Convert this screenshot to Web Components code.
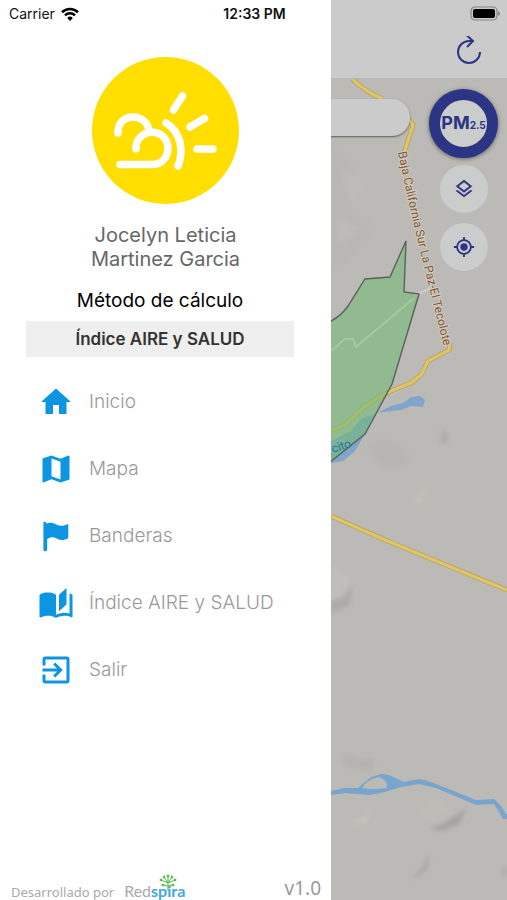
<!DOCTYPE html>
<html lang="es">
<head>
<meta charset="utf-8">
<meta name="viewport" content="width=device-width, initial-scale=1">
<title>Menú</title>
<style>
  body {
    margin: 0;
    font-family: Inter, "Liberation Sans", sans-serif;
    background: #fff;
  }
</style>
</head>
<body>
<app-screen>
  <side-menu slot="menu">
    <user-card slot="header" name="Jocelyn Leticia Martinez Garcia"></user-card>
    <calc-method slot="header" label="Método de cálculo" value="Índice AIRE y SALUD"></calc-method>
    <menu-item icon="home">Inicio</menu-item>
    <menu-item icon="map">Mapa</menu-item>
    <menu-item icon="flag">Banderas</menu-item>
    <menu-item icon="book">Índice AIRE y SALUD</menu-item>
    <menu-item icon="exit">Salir</menu-item>
    <menu-footer slot="footer" version="v1.0"></menu-footer>
  </side-menu>
  <map-page></map-page>
</app-screen>

<script>
const ICONS = {
  home: '<path d="M10 20v-6h4v6h5v-8h3L12 3 2 12h3v8z"/>',
  map: '<path d="M20.5 3l-.16.03L15 5.1 9 3 3.36 4.9c-.21.07-.36.25-.36.48V20.5c0 .28.22.5.5.5l.16-.03L9 18.9l6 2.1 5.64-1.9c.21-.07.36-.25.36-.48V3.5c0-.28-.22-.5-.5-.5zM15 19l-6-2.11V5l6 2.11z"/>',
  flag: '<path d="M4.1 2.5C4.8 2.5 5.5 2.8 5.6 3.6C8 2.9 9.800 3 12.2 4.3C14.5 5.5 17.2 5.5 20.2 3.8V13.3C17.5 15 15 15.200 12.4 13.700C10.5 12.6 8.5 12.600 6.1 14V21C6.100 21.8 5.7 22.200 4.900 22.2C4 22.2 3.600 21.800 3.600 21V3.200C3.600 2.800 3.800 2.500 4.100 2.500Z"/>',
  book: '<path d="M19 2L14 6.5V17.5L19 13V2M6.5 5C4.55 5 2.45 5.4 1 6.5V21.16C1 21.41 1.25 21.66 1.5 21.66C1.6 21.66 1.65 21.59 1.75 21.59C3.1 20.94 5.05 20.5 6.5 20.5C8.45 20.5 10.55 20.9 12 22C13.35 21.15 15.8 20.5 17.5 20.5C19.15 20.5 20.85 20.81 22.25 21.56C22.35 21.61 22.4 21.59 22.5 21.59C22.75 21.59 23 21.34 23 21.09V6.5C22.4 6.05 21.75 5.75 21 5.5V19C19.9 18.65 18.7 18.5 17.5 18.5C15.8 18.5 13.35 19.15 12 20V6.5C10.55 5.4 8.45 5 6.5 5Z"/>',
  exit: '<path d="M10.09 15.59L11.5 17l5-5-5-5-1.41 1.41L12.67 11H3v2h9.67l-2.58 2.59zM19 3H5a2 2 0 0 0-2 2v4h2V5h14v14H5v-4H3v4a2 2 0 0 0 2 2h14a2 2 0 0 0 2-2V5a2 2 0 0 0-2-2z"/>',
};

class AppScreen extends HTMLElement {
  constructor() {
    super();
    this.attachShadow({ mode: 'open' });
  }

  connectedCallback() {
    this.shadowRoot.innerHTML = `
      <style>
        :host {
          position: relative;
          display: grid;
          grid-template-columns: minmax(0, 331px) minmax(0, 1fr);
          min-height: 100vh;
        }
        status-bar {
          position: absolute;
          inset: 0 0 auto 0;
        }
      </style>
      <slot name="menu"></slot>
      <slot></slot>
      <status-bar></status-bar>
    `;
  }
}

class StatusBar extends HTMLElement {
  constructor() {
    super();
    this.attachShadow({ mode: 'open' });
  }

  connectedCallback() {
    this.shadowRoot.innerHTML = `
      <style>
        :host {
          display: grid;
          grid-template-columns: 1fr auto 1fr;
          align-items: center;
          height: 27px;
          padding: 0 7px 0 9px;
          font-size: 14px;
          color: #111;
        }
        .carrier {
          display: flex;
          align-items: center;
          gap: 6px;
        }
        .time { font-weight: 600; }
        .battery { justify-self: end; }
        svg { display: block; }
      </style>
      <div class="carrier">
        <span>Carrier</span>
        <svg width="18" height="14" viewBox="0 0 18 14" fill="none" stroke="#000" stroke-width="2.6">
          <path d="M1 5.2A11.5 11.5 0 0 1 17 5.2"/>
          <path d="M4 8.3A7 7 0 0 1 14 8.3"/>
          <path d="M9 14L6.2 10.9A4 4 0 0 1 11.8 10.9Z" fill="#000" stroke="none"/>
        </svg>
      </div>
      <span class="time">12:33 PM</span>
      <svg class="battery" width="30" height="15" viewBox="0 0 30 15">
        <rect x="1" y="1" width="26" height="13" rx="4" fill="none" stroke="#888" stroke-width="1.2"/>
        <rect x="3" y="3" width="22" height="9" rx="2" fill="#000"/>
        <path d="M28.3 5v5q1.5-1 1.5-2.5T28.3 5z" fill="#777"/>
      </svg>
    `;
  }
}

class SideMenu extends HTMLElement {
  constructor() {
    super();
    this.attachShadow({ mode: 'open' });
  }

  connectedCallback() {
    this.shadowRoot.innerHTML = `
      <style>
        :host {
          display: flex;
          flex-direction: column;
          box-sizing: border-box;
          padding-top: 57px;
          background: #fff;
        }
        nav {
          flex: 1;
          padding-top: 11px;
        }
      </style>
      <slot name="header"></slot>
      <nav><slot></slot></nav>
      <slot name="footer"></slot>
    `;
  }
}

class UserCard extends HTMLElement {
  constructor() {
    super();
    this.attachShadow({ mode: 'open' });
  }

  connectedCallback() {
    const name = this.getAttribute('name') || '';
    this.shadowRoot.innerHTML = `
      <style>
        :host {
          display: flex;
          flex-direction: column;
          align-items: center;
          gap: 19px;
        }
        p {
          margin: 0;
          max-width: 180px;
          font-size: 20px;
          line-height: 24px;
          text-align: center;
          color: #666;
        }
        svg { display: block; }
      </style>
      <svg width="147" height="147" viewBox="0 0 147 147" fill="none" stroke="#fff" stroke-width="7.5" stroke-linecap="round">
        <circle cx="73.5" cy="73.5" r="73.5" fill="#ffde00" stroke="none"/>
        <path d="M26 76C25 56 54 54 57 74"/>
        <path d="M44 92C43 71 75 69 76 91C76 100 70 107 61 107.5H28"/>
        <path d="M74 66C89 75 92 94 86 109"/>
        <path d="M81.5 53L90.5 39M98 70L112.5 61.500M105 92H121"/>
      </svg>
      <p>${name}</p>
    `;
  }
}

class CalcMethod extends HTMLElement {
  constructor() {
    super();
    this.attachShadow({ mode: 'open' });
  }

  connectedCallback() {
    const label = this.getAttribute('label') || '';
    const value = this.getAttribute('value') || '';
    this.shadowRoot.innerHTML = `
      <style>
        :host {
          display: flex;
          flex-direction: column;
          gap: 8px;
          padding: 18px 37px 0 26px;
          text-align: center;
        }
        span {
          font-size: 19px;
          line-height: 24px;
          color: #000;
        }
        button {
          height: 36px;
          border: 0;
          padding: 0;
          font: 600 17px Inter, "Liberation Sans", sans-serif;
          color: #333;
          background: #efefef;
        }
      </style>
      <span id="label">${label}</span>
      <button type="button" aria-describedby="label">${value}</button>
    `;
  }
}

class MenuItem extends HTMLElement {
  constructor() {
    super();
    this.attachShadow({ mode: 'open' });
  }

  connectedCallback() {
    const icon = ICONS[this.getAttribute('icon')] || '';
    this.shadowRoot.innerHTML = `
      <style>
        :host { display: block; }
        a {
          display: flex;
          align-items: center;
          gap: 15px;
          height: 67px;
          padding-left: 38px;
          font-size: 19px;
          font-weight: 300;
          color: #999;
          text-decoration: none;
        }
        svg { fill: #0c96e2; }
      </style>
      <a href="#">
        <svg width="36" height="36" viewBox="0 0 24 24">${icon}</svg>
        <slot></slot>
      </a>
    `;
  }
}

class MenuFooter extends HTMLElement {
  constructor() {
    super();
    this.attachShadow({ mode: 'open' });
  }

  connectedCallback() {
    const version = this.getAttribute('version') || '';
    this.shadowRoot.innerHTML = `
      <style>
        :host {
          display: flex;
          align-items: flex-end;
          gap: 10px;
          padding: 0 10px 0 11px;
          font-family: "Noto Sans", sans-serif;
          font-size: 13px;
          line-height: 16px;
          color: #aaa;
        }
        .brand {
          position: relative;
          font-family: Lato, sans-serif;
          font-size: 16px;
          line-height: 18px;
        }
        .brand b { color: #3fa9e0; }
        .brand svg {
          position: absolute;
          left: 35px;
          top: -8px;
        }
        .version {
          margin-left: auto;
          font-size: 19px;
          line-height: 24px;
          color: #999;
        }
      </style>
      <span>Desarrollado por</span>
      <span class="brand">Red<b>spira</b>
        <svg width="18" height="18" viewBox="0 0 18 18" stroke="#58b947" fill="#58b947">
          <path d="M9 17V8M9 9L2 6M9 9L16 6M9 9L5 3M9 9L13 3M9 9V2M9 12L4 11M9 12L14 11" fill="none"/>
          <circle cx="2" cy="6" r="1"/><circle cx="16" cy="6" r="1"/>
          <circle cx="5" cy="3" r="1"/><circle cx="13" cy="3" r="1"/>
          <circle cx="9" cy="2" r="1"/><circle cx="4" cy="11" r="1"/><circle cx="14" cy="11" r="1"/>
        </svg>
      </span>
      <span class="version">${version}</span>
    `;
  }
}

class MapPage extends HTMLElement {
  constructor() {
    super();
    this.attachShadow({ mode: 'open' });
  }

  connectedCallback() {
    this.shadowRoot.innerHTML = `
      <style>
        :host {
          display: flex;
          flex-direction: column;
          overflow: hidden;
        }
        button {
          display: grid;
          place-items: center;
          border: 0;
          padding: 0;
          color: #2b3583;
        }
        header {
          display: flex;
          justify-content: flex-end;
          align-items: flex-end;
          box-sizing: border-box;
          height: 79px;
          padding: 0 22px 10px;
          background: #cbcbcb;
          border-bottom: 1px solid #b5b5b5;
        }
        header button {
          width: 32px;
          height: 32px;
          background: none;
        }
        .map {
          position: relative;
          flex: 1;
          background: #bbbab6;
        }
        terrain-map {
          position: absolute;
          inset: 0;
        }
        .search {
          position: absolute;
          left: -20px;
          right: 97px;
          top: 20px;
          height: 37px;
          box-sizing: border-box;
          border: 0;
          border-radius: 0 18px 18px 0;
          background: #cbcbcb;
          box-shadow: 0 1px 2px rgba(0, 0, 0, 0.5);
        }
        .tools {
          position: absolute;
          top: 10px;
          right: 9px;
          display: flex;
          flex-direction: column;
          align-items: center;
          gap: 10px;
        }
        .tools button {
          width: 48px;
          height: 48px;
          border-radius: 50%;
          background: #cbcccc;
        }
        .tools .pm {
          display: flex;
          justify-content: center;
          align-items: baseline;
          width: 69px;
          height: 69px;
          box-sizing: border-box;
          margin-bottom: -3px;
          border: 11px solid #2b3583;
          font: 700 18px/46px Inter, sans-serif;
          box-shadow: 0 1px 4px rgba(0, 0, 0, 0.5);
        }
        .pm small { font-size: 10px; }
      </style>
      <header>
        <button type="button" aria-label="Actualizar">
          <svg width="32" height="32" viewBox="0 0 32 32" fill="none" stroke="currentColor" stroke-width="2">
            <path d="M27 16A11 11 0 1 1 16 5H20M14 -0.500L20 5L14 11"/>
          </svg>
        </button>
      </header>
      <div class="map">
        <terrain-map></terrain-map>
        <input class="search" type="text" aria-label="Buscar">
        <div class="tools">
          <button class="pm" type="button">PM<small>2.5</small></button>
          <button type="button" aria-label="Capas">
            <svg width="22" height="22" viewBox="0 0 24 24" fill="currentColor">
              <path d="M12 18.54L19.37 12.8L21 14.07L12 21.07L3 14.07L4.62 12.81L12 18.54M12 16L3 9L12 2L21 9L12 16M12 4.53L6.26 9L12 13.47L17.74 9L12 4.53Z"/>
            </svg>
          </button>
          <button type="button" aria-label="Mi ubicación">
            <svg width="22" height="22" viewBox="0 0 24 24" fill="none" stroke="currentColor" stroke-width="2">
              <circle cx="12" cy="12" r="7.5"/>
              <circle cx="12" cy="12" r="4" fill="currentColor" stroke="none"/>
              <path d="M12 1v4M12 19v4M1 12h4M19 12h4"/>
            </svg>
          </button>
        </div>
      </div>
    `;
  }
}

// map tile: origin is the top left corner of the map area
class TerrainMap extends HTMLElement {
  constructor() {
    super();
    this.attachShadow({ mode: 'open' });
  }

  connectedCallback() {
    this.shadowRoot.innerHTML = `
      <style>
        :host { display: block; }
        svg {
          display: block;
          width: 100%;
          height: 100%;
        }
        text { font-family: Roboto, sans-serif; }
      </style>
      <svg viewBox="0 0 176 821" preserveAspectRatio="xMinYMin slice">
        <defs>
          <filter id="soft"><feGaussianBlur stdDeviation="2"/></filter>
          <path id="road-name" d="M67 73Q76 118 85 155T116 280"/>
        </defs>
        <rect width="176" height="821" fill="#bbbab6"/>
        <!-- relief -->
        <g filter="url(#soft)" opacity="0.6">
          <path d="M0 65Q30 80 22 110T45 145Q20 190 0 190Z" fill="#b7b6b2"/>
          <path d="M8 90L35 105L20 125ZM5 140L30 150L8 165Z" fill="#bfbeba"/>
          <path d="M35 366Q60 352 75 372T50 390Z" fill="#b5b4b0"/>
          <path d="M112 347L119 362L109 364Z" fill="#a5a4a0"/>
          <path d="M82 420L98 405L92 422L80 430Z" fill="#c5c2b8"/>
          <path d="M2 485L20 500L8 520L0 522Z" fill="#c3c2be"/>
          <path d="M0 522Q18 518 23 504L18 526L0 534Z" fill="#a3a29e"/>
          <path d="M10 675L45 680L40 692L15 688Z" fill="#b1b0ac"/>
          <path d="M98 750L113 744L136 729L128 745L112 752Z" fill="#969591"/>
          <path d="M83 734L110 720L122 734L100 742Z" fill="#c0beb6"/>
          <path d="M12 747L39 735L36 744Z" fill="#c9c7bf"/>
          <path d="M99 774L97 790L80 802L92 785Z" fill="#a3a29e"/>
          <path d="M170 795L176 785V797Z" fill="#a09f9b"/>
        </g>
        <!-- water -->
        <path d="M48 333L30 340L20 352L0 362V384L12 382L24 372L34 355L44 334L70 331L80 327L92 328L94 321L89 317L80 318L72 324L60 327Z" fill="#7fa5ca"/>
        <path d="M0 712L14 709H27L40 698L50 695L58 696L73 703L88 700L94 701L105 705L145 721L163 720L170 727L175 735H178V740H172L163 725L145 726L105 709L88 705L70 708L50 714L38 716L14 714L0 716Z" fill="#78a4cd"/>
        <path d="M31 709Q36 700 48 698Q57 701 56 709Q42 711 31 709Z" fill="#bbbab6"/>
        <!-- roads -->
        <g fill="none" stroke="#c2a65b" stroke-width="5">
          <path d="M21 0Q36 14 52 20M78 40L82 46L73 74M119 264L118 271L97 282L90 296L80 304L62 311L48 318L32 329L14 346L0 352"/>
          <path d="M0 437L59 463L176 511"/>
        </g>
        <g fill="none" stroke="#dcc66f" stroke-width="3">
          <path d="M21 0Q36 14 52 20M78 40L82 46L73 74M119 264L118 271L97 282L90 296L80 304L62 311L48 318L32 329L14 346L0 352"/>
          <path d="M0 437L59 463L176 511"/>
        </g>
        <path d="M83 217L100 209" stroke="#cccbc7" stroke-width="2"/>
        <!-- measured area -->
        <path d="M-2 243L0 242Q10 237 17 227L34 200L59 198L75 162L73 213L88 215L61 305L34 355L-2 384Z" fill="#75ba78" fill-opacity="0.6" stroke="#5b625b" stroke-width="1.4"/>
        <path d="M0 272L14 260H22L25 268L83 219" fill="none" stroke="#a8c6a0" stroke-width="2"/>
        <text x="2" y="374" font-size="12" fill="#287593" transform="rotate(-18 2 374)">cito</text>
        <text font-size="12" fill="#85572d" stroke="#cfccc5" stroke-width="2" paint-order="stroke">
          <textPath href="#road-name">Baja California Sur La Paz-El Tecolote</textPath>
        </text>
      </svg>
    `;
  }
}

customElements.define('app-screen', AppScreen);
customElements.define('status-bar', StatusBar);
customElements.define('side-menu', SideMenu);
customElements.define('user-card', UserCard);
customElements.define('calc-method', CalcMethod);
customElements.define('menu-item', MenuItem);
customElements.define('menu-footer', MenuFooter);
customElements.define('map-page', MapPage);
customElements.define('terrain-map', TerrainMap);
</script>
</body>
</html>
